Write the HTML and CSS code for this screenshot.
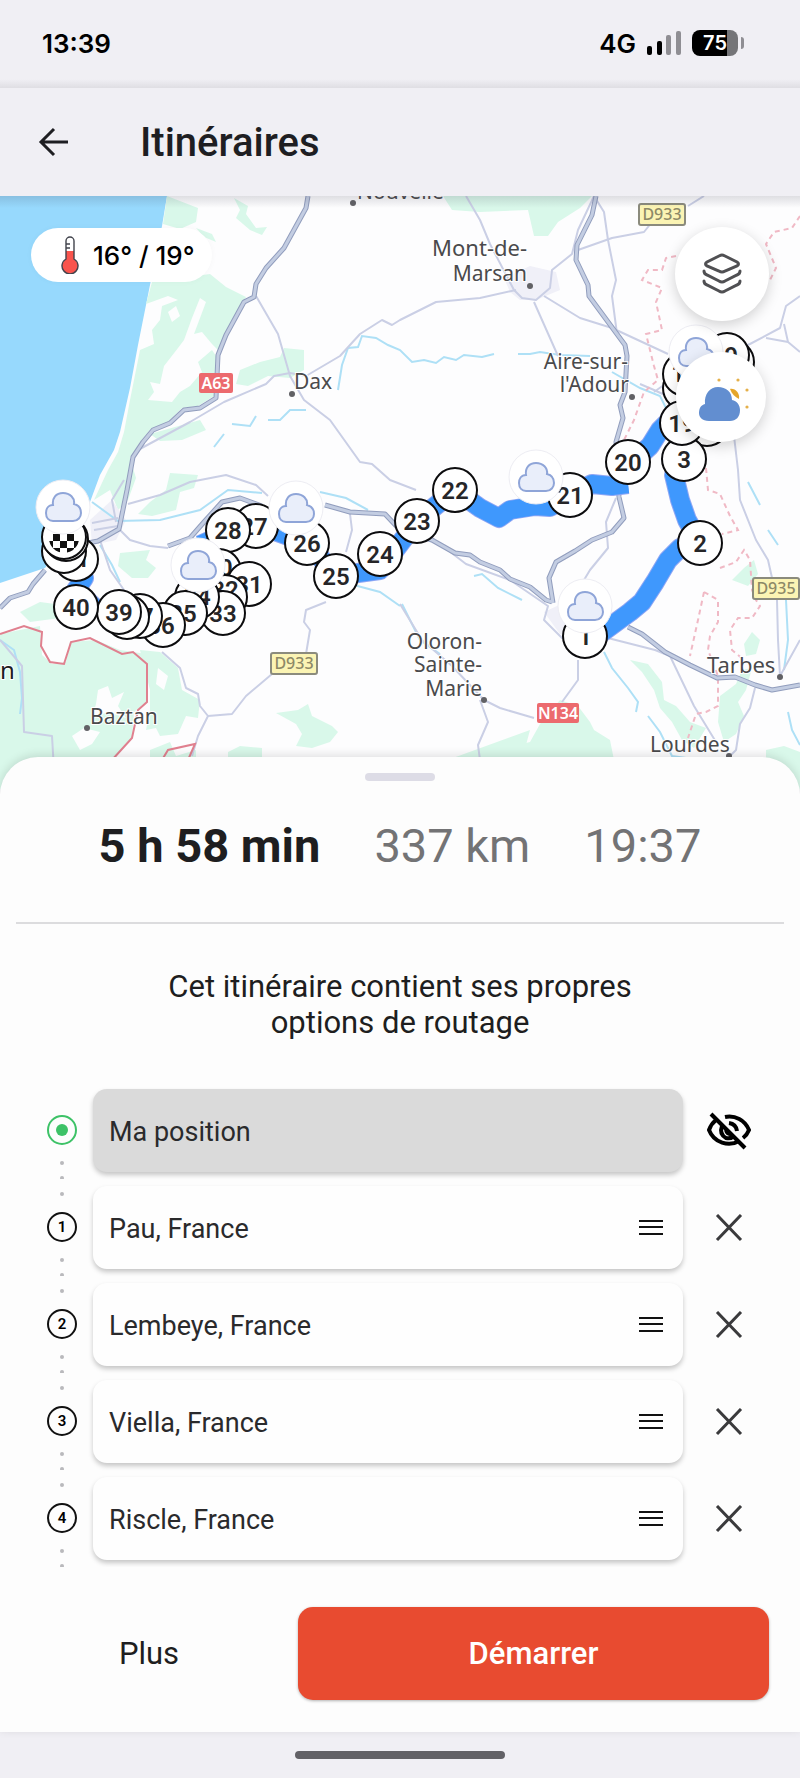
FILE: index.html
```html
<!DOCTYPE html>
<html lang="fr">
<head>
    <meta charset="UTF-8">
    <meta name="viewport" content="width=device-width, initial-scale=1.0">
    <title>Itinéraires</title>
    <link rel="stylesheet" href="styles.css">
</head>
<body>
    <div class="status_bar">
        <span class="clock">13:39</span>
        <div class="status_icons">
            <span class="network">4G</span>
            <svg class="signal" viewBox="0 0 34 24" aria-hidden="true">
                <rect x="0" y="15" width="5" height="9" rx="2"/>
                <rect x="10" y="10" width="5" height="14" rx="2"/>
                <rect class="off" x="19" y="4" width="5" height="20" rx="2"/>
                <rect class="off" x="29" y="0" width="5" height="24" rx="2"/>
            </svg>
            <span class="battery">75</span>
        </div>
    </div>

    <header class="top_bar">
        <button class="back" aria-label="Retour">
            <svg viewBox="0 0 32 32"><path d="M31 15H5M17 2L4 15l13 13"/></svg>
        </button>
        <h1>Itinéraires</h1>
    </header>

    <main>
        <section class="map">
            <svg class="map_canvas" viewBox="0 196 800 594" preserveAspectRatio="xMidYMin slice">
                <defs>
                    <g id="cloud">
                        <circle class="cloud_bg" r="27"/>
                        <path class="cloud" d="M-10 14 H10 C15 14 18 10 18 6 C18 1 15 -2 11 -3 C12 -9 7 -14 0 -14 C-7 -14 -11 -9 -10 -2 C-15 -2 -17 2 -17 6 C-17 11 -14 14 -10 14Z"/>
                    </g>
                    <clipPath id="flag_clip"><circle cx="64" cy="538" r="15"/></clipPath>
                </defs>

                <!-- sea and forests -->
                <path class="sea" d="M0 196H167L162 226L151 280L138 345L130 388L120 432L114 450L100 475L90 502L66 540L45 568L15 578L0 583Z"/>
                <g class="wood">
                    <path d="M167 196L198 208L196 222L180 229L163 224Z"/>
                    <path d="M234 198L248 206L246 214L256 228L267 227L262 235L250 230L236 218L240 210Z"/>
                    <path d="M196 228L212 234L216 242L204 237Z"/>
                    <path d="M152 282L210 274L226 287L246 297L238 312L228 330L218 350L212 344L202 332L194 334L200 318L206 302L200 298L192 318L184 340L178 348L164 366L160 384L150 382L154 392L148 400L172 402L180 392L190 386L202 372L198 362L212 350L216 356L214 396L198 406L182 408L168 422L150 430L140 442L130 458L136 478L128 500L118 510L110 490L94 500L108 470L118 452L124 432L130 400L136 370L140 350L154 344L152 330L160 320L162 306L178 300L168 296L146 304Z"/>
                    <path d="M240 370L260 362L280 357L284 348L304 350L304 370L290 378L268 376L248 386L236 384Z"/>
                    <path d="M150 434L200 420L206 430L182 440L160 441Z"/>
                    <path d="M170 473L198 475L194 488L180 492L176 510L152 516L138 514L150 502L166 490Z"/>
                    <path d="M120 553L150 550L146 560L156 568L148 578L132 578L118 566Z"/>
                    <path d="M443 196H592L580 208L558 222L548 236L534 236L528 210L480 212L452 210Z"/>
                    <path d="M0 634L40 626L42 655L52 664L66 662L70 642L96 640L120 650L146 654L146 702L134 712L132 738L112 760L0 790Z"/>
                    <path d="M140 650L160 652L178 668L182 690L200 700L198 718L186 716L178 734L160 736L156 728L146 730L150 710L150 690Z"/>
                    <path d="M276 713L298 710L308 704L312 716L332 726L338 732L330 742L312 748L296 746L302 734L296 724Z"/>
                    <path d="M150 750L170 742L176 756L196 750V762H150ZM228 752L240 746L262 748L262 760H228Z"/>
                    <path d="M420 770L530 742L540 724L560 700L578 706L590 722L594 730L610 740L616 770Z"/>
                    <path d="M420 770L530 730L526 745L546 738L560 760Z"/>
                    <path d="M630 660L648 664L662 682L664 700L676 706L690 722L706 728L694 748L682 740L672 722L660 708L654 690L642 672Z"/>
                    <path d="M720 696L736 684L742 670L752 668L746 690L738 702L744 716L736 734L724 742L718 722Z"/>
                    <path d="M744 644L752 632L760 640L756 654L746 656ZM732 580L744 568L754 560L758 574L748 586Z"/>
                    <path d="M766 750L784 746L800 752V790H766Z"/>
                    <path d="M20 612L40 602L70 606L60 618L30 622Z"/>
                </g>
                <!-- clearings -->
                <g class="clearing">
                    <path d="M98 690L108 686L112 698L124 692L118 706L126 718L108 712L92 718L96 704Z"/>
                    <path d="M72 736L84 728L100 732L92 744L80 750Z"/>
                    <path d="M158 668L168 676L164 690L156 684Z"/>
                    <path d="M168 312L176 306L180 316L172 322Z"/>
                </g>
                <path class="town" d="M504 278L530 266L556 272L560 290L536 300L520 300L510 292Z"/>
                <path class="town" d="M544 612L570 600L600 620L590 640L560 634Z"/>
                <path class="town" d="M90 520L112 500L126 520L116 540L92 545Z"/>

                <!-- rivers -->
                <g class="river">
                    <path d="M338 390L342 365L348 348L358 347L362 336L376 338L388 345L400 350L412 362L424 360L436 363L444 357L456 360L464 355L482 357L494 354M518 354L530 354L540 352L560 355L590 356"/>
                    <path d="M612 372L640 388L660 396L672 420"/>
                    <path d="M214 447L224 434M232 424L250 426L256 416M268 420L280 420L290 410L306 410"/>
                    <path d="M92 502L118 521L160 520L200 510L228 490L262 493M320 492L346 498L368 510"/>
                    <path d="M100 545L112 565L120 582"/>
                    <path d="M350 584L380 592L400 606"/>
                    <path d="M402 604L420 640L440 654M474 576L482 574L498 588L522 600M604 652L612 668L628 688L638 702L636 712M648 716L660 732L672 756L686 758"/>
                    <path d="M748 482L760 505M768 530L778 545M786 600L788 640L784 670M788 712L792 730L800 745"/>
                    <path d="M0 640L14 650L20 672L22 698L20 714"/>
                </g>

                <!-- secondary roads -->
                <g class="road">
                    <path d="M256 296L278 334L290 376L304 400L330 420L360 462L372 464L390 480L416 490"/>
                    <path d="M138 450L190 422L224 402L266 384L274 376L290 373L306 376L340 356L360 334L382 320L392 325L400 320L436 302L480 298L516 290"/>
                    <path d="M128 504L160 495L190 482L226 475L256 485L268 496"/>
                    <path d="M118 528L130 540L150 546L168 548M100 540L110 570L124 590"/>
                    <path d="M116 522L112 500L124 480M92 523L118 518M94 530L118 526"/>
                    <path d="M466 196L480 220L490 244L514 290L522 298L536 300L550 288L552 270L572 254L578 230L594 196L604 212L608 240L616 280L612 296L617 334"/>
                    <path d="M578 250L612 238L644 232L652 222M688 206L704 196M544 296L580 318L612 328L668 354M534 302L558 356"/>
                    <path d="M640 384L654 390L680 402M654 392L668 382L700 362L750 344L780 328L786 306L800 296M766 338L788 342L800 352M784 324L788 342"/>
                    <path d="M734 436L738 470L740 500L756 540L768 560L777 600L778 640L780 676L800 640"/>
                    <path d="M616 498L606 522L608 548L590 570L584 580"/>
                    <path d="M440 544L466 564L510 580L548 606L544 620L562 638L600 636L655 650L670 656L694 706L716 742M578 660L578 680L562 702M400 604L422 640L452 666L484 700L500 708L534 718M480 700L488 722L478 745L480 760"/>
                    <path d="M326 602L306 610L304 622L310 630L306 654M272 674L246 696L232 714L208 716L200 706L198 694L186 688L180 668L162 652M208 716L198 736L192 756"/>
                    <path d="M346 552L352 530L350 514"/>
                    <path d="M0 640L22 666L24 732L52 736L54 770M755 688L750 708L740 724L736 750L728 758"/>
                </g>

                <!-- department and country borders -->
                <path class="dept" d="M800 216L792 228L774 232L766 244L776 268L770 280M676 256L666 258L662 270L648 270L642 280L662 288L656 302L662 330L646 334L654 366L658 380L644 392L634 420L624 440M706 468L708 490L720 494L730 516L738 530L722 534M720 568L736 562L744 550L750 560L752 590L756 600L760 606L752 618L738 618L730 630L732 650L744 660M704 592L718 600L718 622L710 636L708 650L718 676L718 706L706 712L696 714L688 738M704 592L698 620L690 656"/>
                <path class="border" d="M0 634L24 626L42 632L41 646L50 662L64 664L71 642L90 638L122 654L133 652L147 664L147 702L138 710L132 738L112 760M162 760L168 750L195 744L188 760"/>

                <!-- motorways -->
                <g class="motorway_edge">
                    <path d="M308 196L306 208L284 248L266 268L256 284L254 297L244 302L226 335L218 355L216 398L200 408L184 410L170 423L153 430L143 442L133 457L127 490L119 529L98 541L88 543M45 570L33 584L28 592L10 598L0 608"/>
                    <path d="M596 196L592 215L577 245L576 260L588 285L589 296L625 345L627 356L625 392L620 405L623 418L616 442L619 497L624 518L612 532L592 540L575 551L556 562L549 578L553 603"/>
                    <path d="M168 546L190 538L204 522L222 502L240 498L262 506M325 505L350 512L385 514L400 530L432 540L455 553L470 555L480 562L500 570L510 579L530 587L546 600L552 602M628 627L642 634L665 652L690 665L717 678L735 677L755 685L772 690L800 685"/>
                </g>
                <g class="motorway_fill">
                    <path d="M308 196L306 208L284 248L266 268L256 284L254 297L244 302L226 335L218 355L216 398L200 408L184 410L170 423L153 430L143 442L133 457L127 490L119 529L98 541L88 543M45 570L33 584L28 592L10 598L0 608"/>
                    <path d="M596 196L592 215L577 245L576 260L588 285L589 296L625 345L627 356L625 392L620 405L623 418L616 442L619 497L624 518L612 532L592 540L575 551L556 562L549 578L553 603"/>
                    <path d="M168 546L190 538L204 522L222 502L240 498L262 506M325 505L350 512L385 514L400 530L432 540L455 553L470 555L480 562L500 570L510 579L530 587L546 600L552 602M628 627L642 634L665 652L690 665L717 678L735 677L755 685L772 690L800 685"/>
                </g>

                <!-- place names -->
                <g class="places">
                    <text x="357" y="199">Nouvelle</text><circle cx="353" cy="203" r="3"/>
                    <text class="end town_name" x="527" y="256">Mont-de-</text>
                    <text class="end" x="527" y="281">Marsan</text><circle cx="530" cy="286" r="3"/>
                    <text class="end" x="628" y="369">Aire-sur-</text>
                    <text class="end" x="629" y="392">l'Adour</text><circle cx="632" cy="397" r="3"/>
                    <text x="294" y="389">Dax</text><circle cx="292" cy="394" r="3"/>
                    <text class="end" x="482" y="649">Oloron-</text>
                    <text class="end" x="482" y="672">Sainte-</text>
                    <text class="end" x="482" y="696">Marie</text><circle cx="484" cy="700" r="3"/>
                    <text class="town_name" x="707" y="673">Tarbes</text><circle cx="780" cy="677" r="3"/>
                    <text x="650" y="752">Lourdes</text><circle cx="729" cy="756" r="3"/>
                    <text x="90" y="724">Baztan</text><circle cx="87" cy="728" r="3"/>
                    <text class="big" x="0" y="679">n</text>
                </g>
                <g class="shield_d">
                    <rect x="639" y="204" width="46" height="21" rx="2"/><text x="662" y="220">D933</text>
                    <rect x="271" y="653" width="46" height="21" rx="2"/><text x="294" y="669">D933</text>
                    <rect x="753" y="578" width="46" height="21" rx="2"/><text x="776" y="594">D935</text>
                </g>
                <g class="shield_a">
                    <rect x="199" y="373" width="34" height="20" rx="2"/><text x="216" y="389">A63</text>
                    <rect x="537" y="703" width="42" height="20" rx="2"/><text x="558" y="719">N134</text>
                </g>

                <!-- route -->
                <path class="route halo" d="M600 634L630 612L642 602L655 582L668 560L680 548L700 543L687 520L680 500L674 475L684 459M672 418L660 430L650 446L628 466M628 484L612 486L592 484L570 495L550 507L535 506L510 510L499 518L480 508L455 490L417 521L380 570L336 576L308 543L272 530L240 527L200 545M95 608L76 590L84 578L76 560"/>
                <path class="route" d="M600 634L630 612L642 602L655 582L668 560L680 548L700 543L687 520L680 500L674 475L684 459M672 418L660 430L650 446L628 466M628 484L612 486L592 484L570 495L550 507L535 506L510 510L499 518L480 508L455 490L417 521L380 570L336 576L308 543L272 530L240 527L200 545M95 608L76 590L84 578L76 560"/>

                <!-- numbered steps -->
                <g class="step">
                    <circle cx="585" cy="636" r="22"/><text x="585" y="645">1</text>
                    <circle cx="700" cy="543" r="22"/><text x="700" y="552">2</text>
                    <circle cx="707" cy="424" r="22"/>
                    <circle cx="684" cy="459" r="22"/><text x="684" y="468">3</text>
                    <circle cx="732" cy="362" r="22"/>
                    <circle cx="727" cy="355" r="22"/><text x="731" y="364">9</text>
                    <circle cx="685" cy="388" r="22"/>
                    <circle cx="685" cy="374" r="22"/><text x="685" y="382">17</text>
                    <circle cx="682" cy="423" r="22"/><text x="682" y="432">19</text>
                    <circle cx="628" cy="462" r="22"/><text x="628" y="471">20</text>
                    <circle cx="570" cy="495" r="22"/><text x="570" y="504">21</text>
                    <circle cx="455" cy="490" r="22"/><text x="455" y="499">22</text>
                    <circle cx="417" cy="521" r="22"/><text x="417" y="530">23</text>
                    <circle cx="380" cy="554" r="22"/><text x="380" y="563">24</text>
                    <circle cx="307" cy="543" r="22"/><text x="307" y="552">26</text>
                    <circle cx="336" cy="576" r="22"/><text x="336" y="585">25</text>
                    <circle cx="256" cy="526" r="22"/><text x="254" y="535">27</text>
                    <circle cx="228" cy="530" r="22"/><text x="228" y="539">28</text>
                    <circle cx="219" cy="571" r="22"/><text x="219" y="576">30</text>
                    <circle cx="249" cy="584" r="22"/><text x="249" y="593">31</text>
                    <circle cx="225" cy="597" r="22"/><text x="225" y="598">32</text>
                    <circle cx="223" cy="613" r="22"/><text x="223" y="622">33</text>
                    <circle cx="197" cy="597" r="22"/><text x="197" y="605">34</text>
                    <circle cx="185" cy="613" r="22"/><text x="183" y="622">35</text>
                    <circle cx="163" cy="625" r="22"/><text x="161" y="634">36</text>
                    <circle cx="140" cy="616" r="22"/><text x="140" y="625">37</text>
                    <circle cx="127" cy="617" r="22"/>
                    <circle cx="119" cy="612" r="22"/><text x="119" y="621">39</text>
                    <circle cx="76" cy="607" r="22"/><text x="76" y="616">40</text>
                    <circle cx="76" cy="559" r="22"/><text x="76" y="567">41</text>
                    <circle cx="64" cy="551" r="22"/>
                    <circle cx="66" cy="539" r="22"/>
                    <circle cx="64" cy="537" r="22"/>
                </g>
                <!-- finish flag -->
                <path class="flag" clip-path="url(#flag_clip)" d="M53 534h7v7h-7zM67 534h7v7h-7zM46 541h7v7h-7zM60 541h7v7h-7zM74 541h7v7h-7zM53 548h7v7h-7zM67 548h7v7h-7z"/>

                <!-- weather along the route -->
                <use href="#cloud" x="63" y="507"/>
                <use href="#cloud" x="296" y="508"/>
                <use href="#cloud" x="198" y="565"/>
                <use href="#cloud" x="536" y="477"/>
                <use href="#cloud" x="585" y="606"/>
                <use href="#cloud" x="696" y="352"/>
            </svg>

            <div class="temperature">
                <svg viewBox="0 0 20 38" aria-hidden="true">
                    <path fill="#fff" d="M6 5a4 4 0 0 1 8 0v18a8 8 0 1 1-8 0z"/>
                    <path fill="#f9544d" d="M6 15h8v8a8 8 0 1 1-8 0z"/>
                    <path fill="none" stroke="#41434c" stroke-width="1.4" d="M6 5a4 4 0 0 1 8 0v18a8 8 0 1 1-8 0zM6 8h4M6 12h4"/>
                </svg>
                <span>16° / 19°</span>
            </div>

            <button class="round layers" aria-label="Calques">
                <svg viewBox="0 0 40 42">
                    <path d="M20 2Q21 2 23 3L35 9Q38 11 35 13L23 18Q20 20 17 18L5 13Q2 11 5 9L17 3Q19 2 20 2Z"/>
                    <path d="M2 18Q2 21 5 22L17 28Q20 30 23 28L35 22Q38 21 38 18"/>
                    <path d="M2 28Q2 31 5 32L17 38Q20 40 23 38L35 32Q38 31 38 28"/>
                </svg>
            </button>
            <button class="round weather" aria-label="Météo">
                <svg viewBox="-4 -4 56 48">
                    <path fill="#628ed0" d="M12 44C5 44 2 40 2 36C2 31 4 28 8 27C7 17 13 10 21 10C29 10 35 15 35 23C40 24 43 28 43 33C43 40 39 44 33 44Z"/>
                    <path fill="#e5a62b" d="M33 12C38 11 43 16 42 22C38 20 35 17 33 12Z"/>
                    <g fill="#e5b04a"><circle cx="22" cy="3" r="1.6"/><circle cx="41" cy="3" r="1.6"/><circle cx="50" cy="13" r="1.6"/><circle cx="50" cy="30" r="1.6"/></g>
                </svg>
            </button>
        </section>

        <section class="sheet">
            <div class="grip"></div>
            <div class="summary">
                <strong>5 h 58 min</strong>
                <span>337 km</span>
                <span>19:37</span>
            </div>
            <hr>
            <p class="notice">Cet itinéraire contient ses propres options de routage</p>

            <ul class="stops">
                <li class="start">
                    <svg class="rail" viewBox="0 0 32 97" aria-hidden="true">
                        <circle class="ring" cx="16" cy="48" r="14"/><circle class="core" cx="16" cy="48" r="6"/>
                        <circle class="dot" cx="16" cy="81" r="2"/><circle class="dot" cx="16" cy="96" r="2"/>
                    </svg>
                    <div class="field"><input type="text" value="Ma position" aria-label="Départ"></div>
                    <button class="action" aria-label="Masquer ma position">
                        <svg class="eye" viewBox="0 0 44 40">
                            <path d="M18 6C28 4 38 9 42 19Q40 24 36 27M9 9Q4 13 2 19C7 32 22 36 32 30"/>
                            <path d="M22 12Q29 13 30 20M15 15Q12 23 19 27Q24 28 27 25M19 19Q20 23 24 23"/>
                            <path d="M4 3L38 37"/>
                        </svg>
                    </button>
                </li>
                <li>
                    <svg class="rail" viewBox="0 0 32 97" aria-hidden="true">
                        <circle class="dot" cx="16" cy="15" r="2"/><circle class="ring" cx="16" cy="48" r="14"/><text x="16" y="53">1</text>
                        <circle class="dot" cx="16" cy="81" r="2"/><circle class="dot" cx="16" cy="96" r="2"/>
                    </svg>
                    <div class="field">
                        <input type="text" value="Pau, France" aria-label="Étape 1">
                        <button class="drag" aria-label="Déplacer"><svg viewBox="0 0 24 18"><path d="M0 2h24M0 8h24M0 15h24"/></svg></button>
                    </div>
                    <button class="action" aria-label="Supprimer"><svg viewBox="0 0 28 28"><path d="M2 1l24 25M26 1L2 26"/></svg></button>
                </li>
                <li>
                    <svg class="rail" viewBox="0 0 32 97" aria-hidden="true">
                        <circle class="dot" cx="16" cy="15" r="2"/><circle class="ring" cx="16" cy="48" r="14"/><text x="16" y="53">2</text>
                        <circle class="dot" cx="16" cy="81" r="2"/><circle class="dot" cx="16" cy="96" r="2"/>
                    </svg>
                    <div class="field">
                        <input type="text" value="Lembeye, France" aria-label="Étape 2">
                        <button class="drag" aria-label="Déplacer"><svg viewBox="0 0 24 18"><path d="M0 2h24M0 8h24M0 15h24"/></svg></button>
                    </div>
                    <button class="action" aria-label="Supprimer"><svg viewBox="0 0 28 28"><path d="M2 1l24 25M26 1L2 26"/></svg></button>
                </li>
                <li>
                    <svg class="rail" viewBox="0 0 32 97" aria-hidden="true">
                        <circle class="dot" cx="16" cy="15" r="2"/><circle class="ring" cx="16" cy="48" r="14"/><text x="16" y="53">3</text>
                        <circle class="dot" cx="16" cy="81" r="2"/><circle class="dot" cx="16" cy="96" r="2"/>
                    </svg>
                    <div class="field">
                        <input type="text" value="Viella, France" aria-label="Étape 3">
                        <button class="drag" aria-label="Déplacer"><svg viewBox="0 0 24 18"><path d="M0 2h24M0 8h24M0 15h24"/></svg></button>
                    </div>
                    <button class="action" aria-label="Supprimer"><svg viewBox="0 0 28 28"><path d="M2 1l24 25M26 1L2 26"/></svg></button>
                </li>
                <li>
                    <svg class="rail" viewBox="0 0 32 97" aria-hidden="true">
                        <circle class="dot" cx="16" cy="15" r="2"/><circle class="ring" cx="16" cy="48" r="14"/><text x="16" y="53">4</text>
                        <circle class="dot" cx="16" cy="81" r="2"/><circle class="dot" cx="16" cy="96" r="2"/>
                    </svg>
                    <div class="field">
                        <input type="text" value="Riscle, France" aria-label="Étape 4">
                        <button class="drag" aria-label="Déplacer"><svg viewBox="0 0 24 18"><path d="M0 2h24M0 8h24M0 15h24"/></svg></button>
                    </div>
                    <button class="action" aria-label="Supprimer"><svg viewBox="0 0 28 28"><path d="M2 1l24 25M26 1L2 26"/></svg></button>
                </li>
            </ul>

            <div class="bottom_actions">
                <button class="more">Plus</button>
                <button class="go">Démarrer</button>
            </div>
        </section>
    </main>

    <div class="home_bar"><span></span></div>
</body>
</html>
```

FILE: styles.css
```css
*{box-sizing: border-box;}
body,h1,p,ul{margin: 0; padding: 0;}
body{
    min-height: 100vh; display: flex; flex-direction: column;
    background: #f0eff4; color: #1e1e20; font-family: Roboto, sans-serif; overflow-x: hidden;
}
svg{display: block;}
button{border: none; background-color: transparent; padding: 0; font: inherit; color: inherit; cursor: pointer;}

.status_bar{
    height: 88px; padding: 0 56px 2px 42px; display: flex; justify-content: space-between; align-items: center;
    font-family: Inter, sans-serif; color: #000;
    background: linear-gradient(#f0eff4 90%, #dfdee3);
}
.clock{font-size: 26px; font-weight: 600;}
.status_icons{display: flex; align-items: center; gap: 11px;}
.network{font-size: 26px; font-weight: 600;}
.signal{width: 34px; height: 24px;}
.signal .off{fill: #8f8e93;}
.battery{
    position: relative; width: 46px; height: 26px; border-radius: 8px; margin-right: 6px;
    background: linear-gradient(90deg, #000 76%, #757578 76%);
    color: #fff; font-size: 20px; font-weight: 600; line-height: 26px; text-align: center;
}
.battery::after{
    content: ''; position: absolute; right: -6px; top: 7px; width: 3px; height: 12px;
    border-radius: 0 3px 3px 0; background: #8f8e93;
}

.top_bar{height: 108px; padding: 2px 37px 0; display: flex; align-items: center; gap: 71px;}
.back svg{width: 32px; height: 32px; fill: none; stroke: #1e1e22; stroke-width: 3;}
.top_bar h1{font-size: 40px; font-weight: 500; line-height: 48px; color: #1e1e22;}

main{flex: 1; display: flex; flex-direction: column;}

/* map */
.map{position: relative; flex: 1; min-height: 400px; overflow: hidden; background: #fdfdfe;}
.map_canvas{position: absolute; left: 0; top: 0; width: 100%; height: 100%;}
.map::after{
    content: ''; position: absolute; left: 0; right: 0; top: 0; height: 12px;
    background: linear-gradient(rgba(60,60,80,0.16), rgba(60,60,80,0));
}
.sea{fill: #97d9fd;}
.wood{fill: #d9f8ea;}
.clearing{fill: #fdfdfe;}
.town{fill: #f0f0f8;}
.river{fill: none; stroke: #aee0f6; stroke-width: 2;}
.road{fill: none; stroke: #cacfe5; stroke-width: 2; stroke-linejoin: round;}
.dept{fill: none; stroke: #f0b9c5; stroke-width: 2; stroke-dasharray: 5 4;}
.border{fill: none; stroke: #e0808f; stroke-width: 2;}
.motorway_edge{fill: none; stroke: #919dbd; stroke-width: 5; stroke-linejoin: round;}
.motorway_fill{fill: none; stroke: #c3cde2; stroke-width: 3; stroke-linejoin: round;}
.route{fill: none; stroke: #3f98fd; stroke-width: 18; stroke-linejoin: round;}
.route.halo{stroke: #8fa6f4; stroke-width: 20;}

.places{font-family: "Noto Sans", sans-serif; font-size: 21px;}
.places text{fill: #4a4a4c; stroke: #fff; stroke-width: 2; paint-order: stroke;}
.places circle{fill: #616165;}
.places .end{text-anchor: end;}
.places .town_name{font-size: 22px;}
.places .big{font-size: 24px; fill: #1c1c1e;}
.shield_d,.shield_a{font-family: "Noto Sans", sans-serif; font-size: 16px; font-weight: 500; text-anchor: middle;}
.shield_d rect{fill: #fbf4b4; stroke: #8b8b7d; stroke-width: 2;}
.shield_d text{fill: #8d8967;}
.shield_a{font-weight: 600;}
.shield_a rect{fill: #ec6a6e;}
.shield_a text{fill: #fff;}

.step{font-size: 24px; font-weight: 600; text-anchor: middle;}
.step circle{fill: #fff; stroke: #0c0c0e; stroke-width: 2;}
.step text{fill: #262628;}
.flag{fill: #111;}
.cloud_bg{fill: #fff; stroke: #ededf3; stroke-width: 1;}
.cloud{fill: #e9eefa; stroke: #8fa5d8; stroke-width: 2;}

.temperature{
    position: absolute; left: 31px; top: 32px; height: 54px; padding: 0 17px 0 29px;
    display: flex; align-items: center; gap: 13px; border-radius: 27px; background: #fff;
    box-shadow: 0 0 6px rgba(0,0,0,0.03);
    font-family: Inter, sans-serif; font-size: 26px; font-weight: 500; color: #000;
}
.temperature svg{width: 20px; height: 38px;}
.round{
    position: absolute; display: flex; justify-content: center; align-items: center;
    border-radius: 50%; background: #fff; box-shadow: 0 4px 14px rgba(0,0,0,0.18);
}
.layers{right: 31px; top: 31px; width: 94px; height: 94px;}
.layers svg{width: 40px; height: 42px; fill: none; stroke: #505053; stroke-width: 3; stroke-linecap: round;}
.weather{right: 34px; top: 156px; width: 90px; height: 90px;}
.weather svg{width: 56px; height: 48px;}

/* bottom sheet */
.sheet{
    position: relative; margin-top: -32px; border-radius: 38px 38px 0 0; background: #fdfdfd;
    padding-top: 16px; box-shadow: 0 -2px 10px rgba(0,0,0,0.12);
}
.grip{width: 70px; height: 8px; border-radius: 4px; background: #dddce6; margin: 0 auto 37px;}
.summary{
    display: flex; justify-content: center; gap: 54px; padding: 0 16px 48px;
    font-size: 47px; line-height: 56px; color: #737375;
}
.summary strong{font-weight: 700; color: #1e1e20;}
hr{border: none; height: 2px; margin: 0 16px; background: #dcdcde;}
.notice{max-width: 540px; margin: 45px auto 41px; font-size: 31px; line-height: 36px; text-align: center;}

.stops{list-style: none; overflow: hidden;}
.stops li{
    height: 97px; padding: 0 40px 0 46px;
    display: grid; grid-template-columns: 32px 1fr 62px; column-gap: 15px; align-items: center;
}
.rail{width: 32px; height: 97px; font-size: 15px; font-weight: 600; text-anchor: middle;}
.rail .ring{fill: none; stroke: #111; stroke-width: 2;}
.rail .dot{fill: #b9b9bc;}
.start .ring{stroke: #3dc267;}
.start .core{fill: #3dc267;}
.field{
    height: 83px; padding: 0 20px 0 16px; display: flex; align-items: center; border-radius: 14px;
    background: #fefefe; box-shadow: 0 3px 5px rgba(0,0,0,0.22);
}
.start .field{background: #dadada;}
.field input{
    flex: 1; min-width: 0; height: 100%; border: none; outline: none; background: transparent; padding: 2px 0 0;
    font: 27px Roboto, sans-serif; color: #2a2a2c;
}
.drag svg{width: 24px; height: 18px; stroke: #111; stroke-width: 2;}
.action{height: 60px; display: flex; justify-content: center; align-items: center;}
.action svg{width: 28px; height: 28px; fill: none; stroke: #3a3a3c; stroke-width: 3;}
.action .eye{width: 44px; height: 40px; stroke: #000; stroke-width: 4;}

.bottom_actions{display: grid; grid-template-columns: 298px 1fr; padding: 40px 31px 32px 0; font-size: 31px;}
.go{height: 93px; border-radius: 15px; background: #e84b30; color: #fff; font-weight: 500; box-shadow: 0 1px 3px rgba(0,0,0,0.3);}

.home_bar{height: 46px; display: flex; justify-content: center; align-items: center;}
.home_bar span{width: 210px; height: 8px; border-radius: 4px; background: #626166;}
```
